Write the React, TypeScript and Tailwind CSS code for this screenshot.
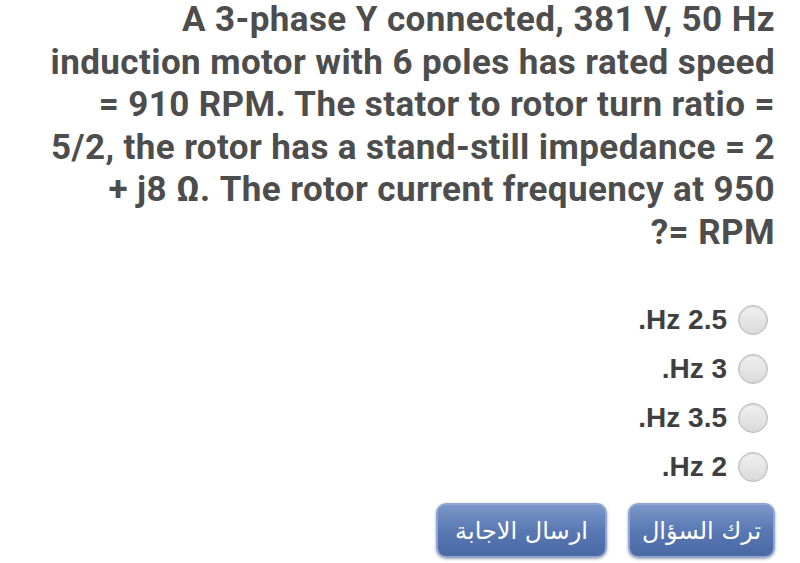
const lines = [
  "A 3-phase Y connected, 381 V, 50 Hz",
  "induction motor with 6 poles has rated speed",
  "= 910 RPM. The stator to rotor turn ratio =",
  "5/2, the rotor has a stand-still impedance = 2",
  "+ j8 Ω. The rotor current frequency at 950",
  "?= RPM",
];

const options = [".Hz 2.5", ".Hz 3", ".Hz 3.5", ".Hz 2"];

function Radio() {
  return (
    <span className="block w-[30px] h-[30px] rounded-full border border-[#b9b9b9] bg-gradient-to-b from-[#f2f2f2] to-[#d9d9d9] shadow-[inset_0_1px_2px_rgba(0,0,0,0.15)]" />
  );
}

export default function App() {
  return (
    <div className="w-[800px] h-[563px] bg-white overflow-hidden flex flex-col">
      {/* Question */}
      <div
        className="pr-[25px] -mt-[1px] text-right text-[#4d4d4d] font-bold text-[35px] leading-[42.5px] tracking-[0.4px]"
        style={{ fontFamily: 'Roboto, "Liberation Sans", sans-serif' }}
      >
        {lines.map((l) => (
          <div key={l}>{l}</div>
        ))}
      </div>

      {/* Answers */}
      <div className="mt-[51px] pr-[32px] flex flex-col items-end gap-[19px]" style={{ fontFamily: '"Liberation Sans", Arial, sans-serif' }}>
        {options.map((o) => (
          <div key={o} className="flex items-center gap-[11px] h-[30px]">
            <span className="text-[28px] font-bold text-[#3f3f3f]">{o}</span>
            <Radio />
          </div>
        ))}
      </div>

      {/* Buttons */}
      <div className="mt-auto mb-[5px] pr-[25px] flex justify-end gap-[21px]" style={{ fontFamily: '"DejaVu Sans", "Noto Sans", sans-serif' }}>
        <button className="w-[171px] h-[55px] rounded-[10px] border-2 border-[#8fa6d3] bg-gradient-to-b from-[#7b96c9] via-[#5a79b3] to-[#4a68a4] text-white text-[24px] shadow-[0_1px_3px_rgba(0,0,0,0.35)]">
          ارسال الاجابة
        </button>
        <button className="w-[147px] h-[55px] rounded-[10px] border-2 border-[#8fa6d3] bg-gradient-to-b from-[#7b96c9] via-[#5a79b3] to-[#4a68a4] text-white text-[24px] shadow-[0_1px_3px_rgba(0,0,0,0.35)]">
          ترك السؤال
        </button>
      </div>
    </div>
  );
}
